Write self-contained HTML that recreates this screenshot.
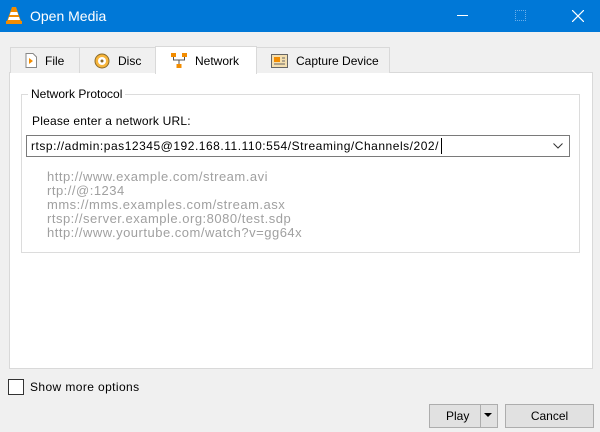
<!DOCTYPE html>
<html><head><style>
*{box-sizing:border-box;margin:0;padding:0}
body{width:600px;height:432px;background:#f0f0f0;font-family:"Liberation Sans",sans-serif;font-size:12px;color:#000;position:relative;overflow:hidden}
.abs{position:absolute}
.title{left:0;top:0;width:600px;height:32px;background:#0078d7;color:#fff}
.tab{position:absolute;top:47px;height:26px;border:1px solid #d9d9d9;border-bottom:none;background:#f0f0f0;display:flex;align-items:center;padding-left:14px;font-size:12px}
.tab svg{margin-right:8px}
.ex{position:absolute;left:47px;color:#a0a0a0;font-size:13px;letter-spacing:0.5px}
.btn{position:absolute;top:404px;height:24px;background:#e1e1e1;border:1px solid #adadad;display:flex;align-items:center;justify-content:center}
</style></head><body>
<div class="abs title">
<svg class="abs" style="left:6px;top:6px" width="16" height="18" viewBox="0 0 16 18"><path d="M6 1h4l5 14H1z" fill="#f28c00"/><path d="M4.7 6h6.6l1 3H3.7zM3 11h10l1 3H2z" fill="#fff"/><rect x="0" y="15" width="16" height="3" fill="#f28c00"/></svg>
<div class="abs" style="left:30px;top:8px;font-size:14px">Open Media</div>
<div class="abs" style="left:457px;top:15px;width:11px;height:1px;background:#fff"></div>
<div class="abs" style="left:515px;top:10px;width:11px;height:11px;border:1px dotted #6aaeea"></div>
<svg class="abs" style="left:572px;top:10px" width="12" height="12"><path d="M0 0L12 12M12 0L0 12" stroke="#fff" stroke-width="1.2"/></svg>
</div>
<div class="abs" style="left:9px;top:72px;width:584px;height:297px;background:#fff;border:1px solid #d9d9d9"></div>
<div class="tab" style="left:10px;width:70px"><svg width="12" height="15"><path d="M1 .5h7l3.5 3.5v10.5H1z" fill="#fff" stroke="#888"/><path d="M4 5l4 3-4 3z" fill="#f28c00"/></svg>File</div>
<div class="tab" style="left:79px;width:77px"><svg width="16" height="16"><circle cx="8" cy="8" r="7" fill="#f7b53b" stroke="#8a6a2a"/><circle cx="8" cy="8" r="4" fill="#fff"/><circle cx="8" cy="8" r="1.5" fill="#8a6a2a"/></svg>Disc</div>
<div class="tab" style="left:155px;top:46px;height:28px;width:102px;background:#fff;padding-left:15px"><svg width="16" height="15"><rect x="0" y="0" width="5" height="4" fill="#f28c00"/><rect x="11" y="0" width="5" height="4" fill="#f28c00"/><rect x="5.5" y="11" width="5" height="4" fill="#f28c00"/><path d="M2.5 4v3h11V4M8 7v4" stroke="#555" fill="none"/></svg>Network</div>
<div class="tab" style="left:256px;width:134px"><svg width="17" height="14"><rect x=".5" y=".5" width="16" height="13" fill="#f4dfb0" stroke="#666"/><rect x="3" y="3" width="6" height="5" fill="#f28c00"/><path d="M11 4h3M11 7h3M3 10h11" stroke="#666"/></svg>Capture Device</div>
<div class="abs" style="left:21px;top:94px;width:559px;height:159px;border:1px solid #dcdcdc"></div>
<div class="abs" style="left:28px;top:87px;background:#fff;padding:0 3px">Network Protocol</div>
<div class="abs" style="left:32px;top:114px;letter-spacing:0.2px">Please enter a network URL:</div>
<div class="abs" style="left:26px;top:135px;width:544px;height:22px;border:1px solid #7a7a7a;background:#fff"></div>
<div class="abs" style="left:31px;top:139px;letter-spacing:0.52px">rtsp://admin:pas12345@192.168.11.110:554/Streaming/Channels/202/</div>
<div class="abs" style="left:441px;top:138px;width:1px;height:16px;background:#000"></div>
<svg class="abs" style="left:553px;top:143px" width="10" height="6"><path d="M.5 .5L5 5 9.5.5" stroke="#333" fill="none"/></svg>
<div class="ex" style="top:169px">http://www.example.com/stream.avi</div>
<div class="ex" style="top:183px">rtp://@:1234</div>
<div class="ex" style="top:197px">mms://mms.examples.com/stream.asx</div>
<div class="ex" style="top:211px">rtsp://server.example.org:8080/test.sdp</div>
<div class="ex" style="top:225px">http://www.yourtube.com/watch?v=gg64x</div>
<div class="abs" style="left:8px;top:379px;width:16px;height:16px;border:1px solid #333;background:#fff"></div>
<div class="abs" style="left:30px;top:380px;letter-spacing:0.4px">Show more options</div>
<div class="btn" style="left:429px;width:69px;justify-content:flex-start;padding-left:16px">Play</div>
<div class="abs" style="left:480px;top:405px;width:1px;height:22px;background:#adadad"></div>
<svg class="abs" style="left:484px;top:413px" width="8" height="5"><path d="M0 0h8L4 4z" fill="#000"/></svg>
<div class="btn" style="left:505px;width:89px">Cancel</div>
</body></html>
